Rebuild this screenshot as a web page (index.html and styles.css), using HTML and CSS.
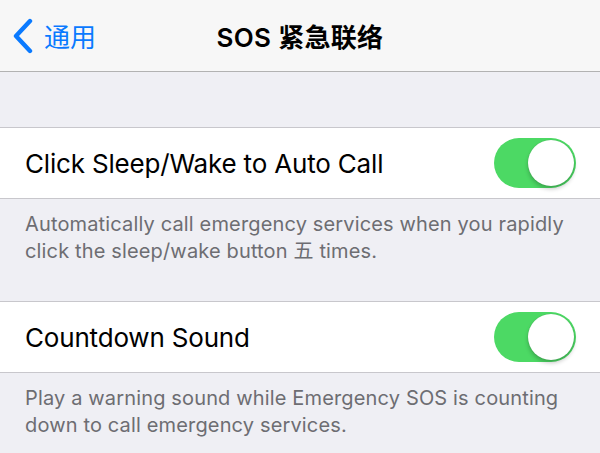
FILE: index.html
```html
<!DOCTYPE html>
<html lang="zh">
  <head>
    <meta charset="utf-8">
    <title>SOS 紧急联络</title>
    <link rel="stylesheet" href="styles.css">
  </head>
  <body>
    <header class="navbar">
      <a class="back" href="#">
        <svg class="chevron" width="22" height="36" viewBox="0 0 22 36">
          <path d="M18 3 L4 18 L18 33" fill="none" stroke="currentColor" stroke-width="4.4" stroke-linecap="round" stroke-linejoin="round"/>
        </svg>
        <span>通用</span>
      </a>
      <h1 class="title">SOS 紧急联络</h1>
    </header>

    <main>
      <section class="group">
        <div class="cell">
          <span class="cell-label">Click Sleep/Wake to Auto Call</span>
          <span class="switch on"><span class="knob"></span></span>
        </div>
      </section>
      <p class="footer">Automatically call emergency services when you rapidly click the sleep/wake button 五 times.</p>

      <section class="group">
        <div class="cell">
          <span class="cell-label">Countdown Sound</span>
          <span class="switch on"><span class="knob"></span></span>
        </div>
      </section>
      <p class="footer">Play a warning sound while Emergency SOS is counting down to call emergency services.</p>
    </main>
  </body>
</html>
```

FILE: styles.css
```css
:root {
  --group-bg: #efeff4;
  --nav-bg: #f7f7f7;
  --separator: #c8c7cc;
  --nav-border: #b2b2b2;
  --tint: #0a7aff;
  --footer-text: #6d6d72;
  --switch-on: #4cd964;
}

html, body {
  margin: 0;
  background: var(--group-bg);
}

body {
  font-family: "Inter", "Noto Sans CJK SC", sans-serif;
  color: #000;
  overflow: hidden;
}

.navbar {
  height: 71px;
  background: var(--nav-bg);
  border-bottom: 1px solid var(--nav-border);
  display: grid;
  grid-template-columns: 1fr auto 1fr;
  align-items: center;
}
  .back {
    display: flex;
    align-items: center;
    gap: 10px;
    padding-left: 12px;
    color: var(--tint);
    text-decoration: none;
    font-size: 26px;
    font-family: "Noto Sans CJK SC", sans-serif;
  }
  .title {
    margin: 0;
    font-size: 26px;
    font-weight: 600;
    letter-spacing: 0.3px;
    font-family: "Inter", "Noto Sans CJK SC", sans-serif;
  }

main {
  padding-top: 55px;
}

.group {
  background: #fff;
  border-top: 1px solid var(--separator);
  border-bottom: 1px solid var(--separator);
}

.cell {
  height: 70px;
  display: flex;
  align-items: center;
  justify-content: space-between;
  padding: 0 24px 0 25px;
}
  .cell-label {
    font-size: 26px;
    letter-spacing: -0.18px;
  }

.switch {
  width: 82px;
  height: 50px;
  box-sizing: border-box;
  border-radius: 25px;
  background: var(--switch-on);
  display: flex;
  align-items: center;
  justify-content: flex-end;
  padding: 2px;
}
  .knob {
    width: 46px;
    height: 46px;
    border-radius: 50%;
    background: #fff;
    box-shadow: 0 3px 4px rgba(0, 0, 0, 0.22), 0 0 1px rgba(0, 0, 0, 0.2);
  }

.footer {
  margin: 0;
  padding: 12px 25px 36px;
  font-size: 20px;
  line-height: 27px;
  letter-spacing: 0.15px;
  color: var(--footer-text);
}
```
